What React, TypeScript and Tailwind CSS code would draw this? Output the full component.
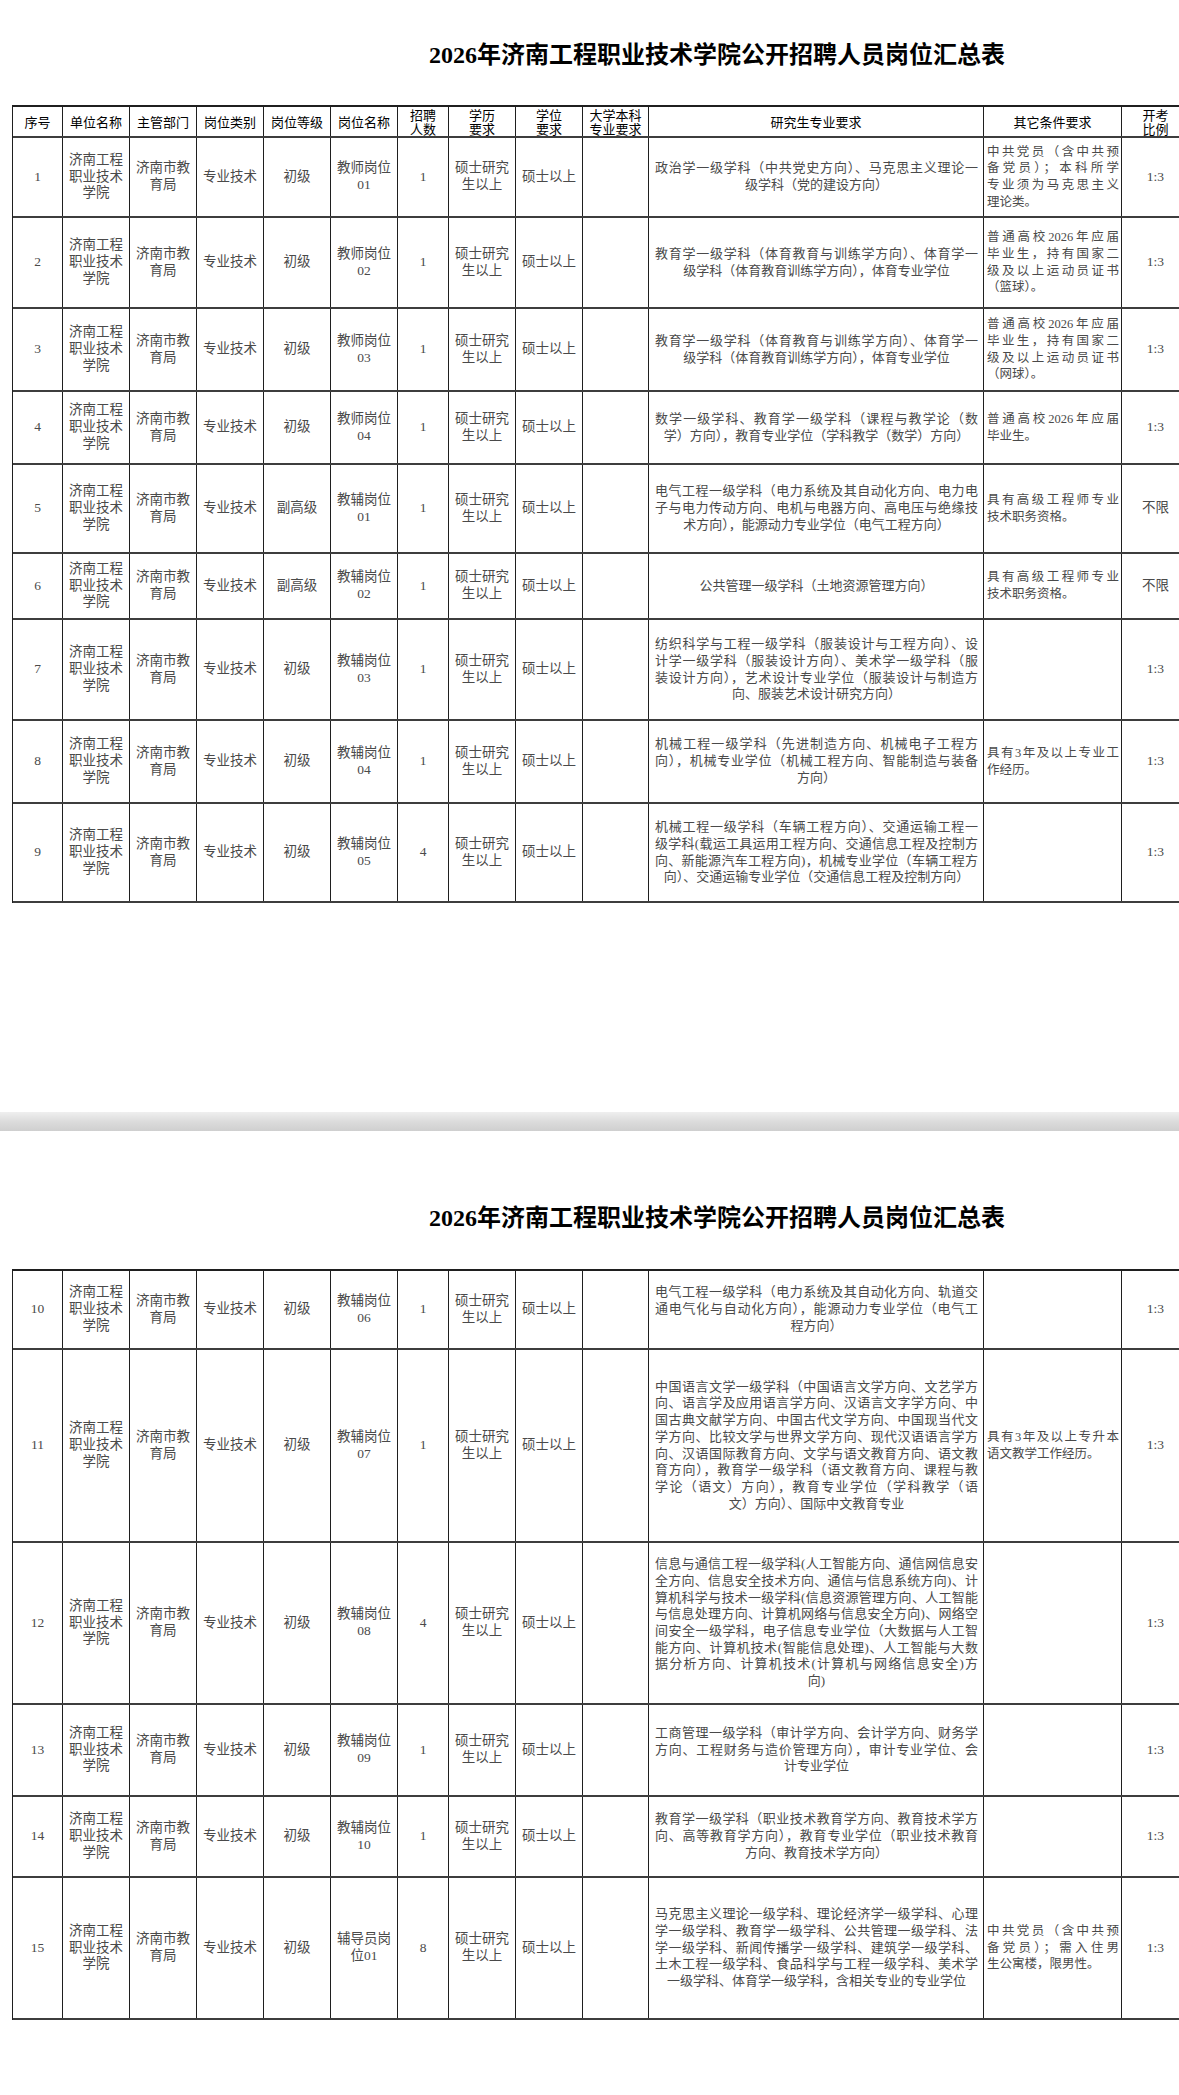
import clsx from 'clsx';

type Row = {
  no: string;
  level: string;
  post: [string, string];
  count: string;
  lines: string[];
  other: string[];
  ratio: string;
  h: string;
};

const GRID =
  'grid grid-cols-[50px_67px_67px_67px_67px_67px_51px_67px_67px_66px_335px_138px_68px]';

// wrap: width that makes a two-line header break where the sheet breaks it
const HEAD: { t: string; wrap?: string }[] = [
  { t: '序号' },
  { t: '单位名称' },
  { t: '主管部门' },
  { t: '岗位类别' },
  { t: '岗位等级' },
  { t: '岗位名称' },
  { t: '招聘人数', wrap: 'w-[2.1em]' },
  { t: '学历要求', wrap: 'w-[2.1em]' },
  { t: '学位要求', wrap: 'w-[2.1em]' },
  { t: '大学本科专业要求', wrap: 'w-[4.1em]' },
  { t: '研究生专业要求' },
  { t: '其它条件要求' },
  { t: '开考比例', wrap: 'w-[2.1em]' },
];

const PAGE_ONE: Row[] = [
  {
    no: '1',
    level: '初级',
    post: ['教师岗位', '01'],
    count: '1',
    lines: ['政治学一级学科（中共党史方向）、马克思主义理论一', '级学科（党的建设方向）'],
    other: ['中共党员（含中共预', '备党员）；本科所学', '专业须为马克思主义', '理论类。'],
    ratio: '1:3',
    h: 'h-[80px]',
  },
  {
    no: '2',
    level: '初级',
    post: ['教师岗位', '02'],
    count: '1',
    lines: ['教育学一级学科（体育教育与训练学方向）、体育学一', '级学科（体育教育训练学方向），体育专业学位'],
    other: ['普通高校2026年应届', '毕业生，持有国家二', '级及以上运动员证书', '（篮球）。'],
    ratio: '1:3',
    h: 'h-[91px]',
  },
  {
    no: '3',
    level: '初级',
    post: ['教师岗位', '03'],
    count: '1',
    lines: ['教育学一级学科（体育教育与训练学方向）、体育学一', '级学科（体育教育训练学方向），体育专业学位'],
    other: ['普通高校2026年应届', '毕业生，持有国家二', '级及以上运动员证书', '（网球）。'],
    ratio: '1:3',
    h: 'h-[83px]',
  },
  {
    no: '4',
    level: '初级',
    post: ['教师岗位', '04'],
    count: '1',
    lines: ['数学一级学科、教育学一级学科（课程与教学论（数', '学）方向），教育专业学位（学科教学（数学）方向）'],
    other: ['普通高校2026年应届', '毕业生。'],
    ratio: '1:3',
    h: 'h-[73px]',
  },
  {
    no: '5',
    level: '副高级',
    post: ['教辅岗位', '01'],
    count: '1',
    lines: [
      '电气工程一级学科（电力系统及其自动化方向、电力电',
      '子与电力传动方向、电机与电器方向、高电压与绝缘技',
      '术方向），能源动力专业学位（电气工程方向）',
    ],
    other: ['具有高级工程师专业', '技术职务资格。'],
    ratio: '不限',
    h: 'h-[89px]',
  },
  {
    no: '6',
    level: '副高级',
    post: ['教辅岗位', '02'],
    count: '1',
    lines: ['公共管理一级学科（土地资源管理方向）'],
    other: ['具有高级工程师专业', '技术职务资格。'],
    ratio: '不限',
    h: 'h-[66px]',
  },
  {
    no: '7',
    level: '初级',
    post: ['教辅岗位', '03'],
    count: '1',
    lines: [
      '纺织科学与工程一级学科（服装设计与工程方向）、设',
      '计学一级学科（服装设计方向）、美术学一级学科（服',
      '装设计方向），艺术设计专业学位（服装设计与制造方',
      '向、服装艺术设计研究方向）',
    ],
    other: [],
    ratio: '1:3',
    h: 'h-[101px]',
  },
  {
    no: '8',
    level: '初级',
    post: ['教辅岗位', '04'],
    count: '1',
    lines: [
      '机械工程一级学科（先进制造方向、机械电子工程方',
      '向），机械专业学位（机械工程方向、智能制造与装备',
      '方向）',
    ],
    other: ['具有3年及以上专业工', '作经历。'],
    ratio: '1:3',
    h: 'h-[83px]',
  },
  {
    no: '9',
    level: '初级',
    post: ['教辅岗位', '05'],
    count: '4',
    lines: [
      '机械工程一级学科（车辆工程方向）、交通运输工程一',
      '级学科(载运工具运用工程方向、交通信息工程及控制方',
      '向、新能源汽车工程方向)，机械专业学位（车辆工程方',
      '向）、交通运输专业学位（交通信息工程及控制方向）',
    ],
    other: [],
    ratio: '1:3',
    h: 'h-[99px]',
  },
];

const PAGE_TWO: Row[] = [
  {
    no: '10',
    level: '初级',
    post: ['教辅岗位', '06'],
    count: '1',
    lines: [
      '电气工程一级学科（电力系统及其自动化方向、轨道交',
      '通电气化与自动化方向），能源动力专业学位（电气工',
      '程方向）',
    ],
    other: [],
    ratio: '1:3',
    h: 'h-[79px]',
  },
  {
    no: '11',
    level: '初级',
    post: ['教辅岗位', '07'],
    count: '1',
    lines: [
      '中国语言文学一级学科（中国语言文学方向、文艺学方',
      '向、语言学及应用语言学方向、汉语言文字学方向、中',
      '国古典文献学方向、中国古代文学方向、中国现当代文',
      '学方向、比较文学与世界文学方向、现代汉语语言学方',
      '向、汉语国际教育方向、文学与语文教育方向、语文教',
      '育方向），教育学一级学科（语文教育方向、课程与教',
      '学论（语文）方向），教育专业学位（学科教学（语',
      '文）方向）、国际中文教育专业',
    ],
    other: ['具有3年及以上专升本', '语文教学工作经历。'],
    ratio: '1:3',
    h: 'h-[193px]',
  },
  {
    no: '12',
    level: '初级',
    post: ['教辅岗位', '08'],
    count: '4',
    lines: [
      '信息与通信工程一级学科(人工智能方向、通信网信息安',
      '全方向、信息安全技术方向、通信与信息系统方向)、计',
      '算机科学与技术一级学科(信息资源管理方向、人工智能',
      '与信息处理方向、计算机网络与信息安全方向)、网络空',
      '间安全一级学科，电子信息专业学位（大数据与人工智',
      '能方向、计算机技术(智能信息处理)、人工智能与大数',
      '据分析方向、计算机技术(计算机与网络信息安全)方',
      '向)',
    ],
    other: [],
    ratio: '1:3',
    h: 'h-[162px]',
  },
  {
    no: '13',
    level: '初级',
    post: ['教辅岗位', '09'],
    count: '1',
    lines: [
      '工商管理一级学科（审计学方向、会计学方向、财务学',
      '方向、工程财务与造价管理方向），审计专业学位、会',
      '计专业学位',
    ],
    other: [],
    ratio: '1:3',
    h: 'h-[92px]',
  },
  {
    no: '14',
    level: '初级',
    post: ['教辅岗位', '10'],
    count: '1',
    lines: [
      '教育学一级学科（职业技术教育学方向、教育技术学方',
      '向、高等教育学方向），教育专业学位（职业技术教育',
      '方向、教育技术学方向）',
    ],
    other: [],
    ratio: '1:3',
    h: 'h-[81px]',
  },
  {
    no: '15',
    level: '初级',
    post: ['辅导员岗', '位01'],
    count: '8',
    lines: [
      '马克思主义理论一级学科、理论经济学一级学科、心理',
      '学一级学科、教育学一级学科、公共管理一级学科、法',
      '学一级学科、新闻传播学一级学科、建筑学一级学科、',
      '土木工程一级学科、食品科学与工程一级学科、美术学',
      '一级学科、体育学一级学科，含相关专业的专业学位',
    ],
    other: ['中共党员（含中共预', '备党员）；需入住男', '生公寓楼，限男性。'],
    ratio: '1:3',
    h: 'h-[142px]',
  },
];

function Cell({ children, className }: { children?: React.ReactNode; className?: string }) {
  return (
    <div
      className={clsx(
        'flex flex-col items-center justify-center border-r border-[#1f1f1f] text-center',
        className
      )}
    >
      {children}
    </div>
  );
}

function Title({ className }: { className?: string }) {
  return (
    <h1
      className={clsx(
        'pl-[417px] text-[24px] leading-[28px] font-bold text-black font-["Liberation_Serif","Noto_Sans_CJK_SC",serif]',
        className
      )}
    >
      2026年济南工程职业技术学院公开招聘人员岗位汇总表
    </h1>
  );
}

function HeaderRow() {
  return (
    <div className={clsx(GRID, 'h-[31px] border-b-2 border-[#3d3d3d]')}>
      {HEAD.map((h) => (
        <Cell key={h.t} className="text-[13px] leading-[14px] text-black font-['Noto_Sans_CJK_SC',sans-serif]">
          <span className={clsx('block', h.wrap)}>{h.t}</span>
        </Cell>
      ))}
    </div>
  );
}

function DataRow({ row }: { row: Row }) {
  const last = row.lines.length - 1;
  return (
    <div className={clsx(GRID, row.h, 'border-b-2 border-[#3d3d3d] text-[13.5px] leading-[16.7px] text-[#4a4a4a]')}>
      <Cell>{row.no}</Cell>
      <Cell>
        <span>济南工程</span>
        <span>职业技术</span>
        <span>学院</span>
      </Cell>
      <Cell>
        <span>济南市教</span>
        <span>育局</span>
      </Cell>
      <Cell>专业技术</Cell>
      <Cell>{row.level}</Cell>
      <Cell>
        <span>{row.post[0]}</span>
        <span>{row.post[1]}</span>
      </Cell>
      <Cell>{row.count}</Cell>
      <Cell>
        <span>硕士研究</span>
        <span>生以上</span>
      </Cell>
      <Cell>硕士以上</Cell>
      <Cell />
      <Cell className="items-stretch pr-[5px] pl-[6px] text-[13px]">
        {row.lines.map((line, i) => (
          <div
            key={i}
            className={i === last ? 'text-center' : 'text-justify [text-align-last:justify]'}
          >
            {line}
          </div>
        ))}
      </Cell>
      <Cell className="items-stretch pr-[2px] pl-[3px] text-[12.5px]">
        {row.other.map((line, i) => (
          <div
            key={i}
            className={
              i === row.other.length - 1 ? 'text-left' : 'text-justify [text-align-last:justify]'
            }
          >
            {line}
          </div>
        ))}
      </Cell>
      <Cell>{row.ratio}</Cell>
    </div>
  );
}

export default function App() {
  return (
    <div className="min-h-[2095px] w-[1179px] overflow-hidden bg-white font-['Liberation_Serif','Noto_Sans_CJK_SC',serif]">
      {/* page 1 */}
      <div className="pl-[12px]">
        <Title className="pt-[41px]" />
        <div className="mt-[36px] w-[1177px] border-t-2 border-l border-[#1f1f1f]">
          <HeaderRow />
          {PAGE_ONE.map((row) => (
            <DataRow key={row.no} row={row} />
          ))}
        </div>
      </div>

      {/* page break */}
      <div className="mt-[209px] h-[19px] bg-linear-to-b from-[#efefef] via-[#dcdcdc] to-[#cfcfcf]" />

      {/* page 2 */}
      <div className="pl-[12px]">
        <Title className="pt-[73px]" />
        <div className="mt-[37px] w-[1177px] border-t-2 border-l border-[#1f1f1f]">
          {PAGE_TWO.map((row) => (
            <DataRow key={row.no} row={row} />
          ))}
        </div>
      </div>
    </div>
  );
}
